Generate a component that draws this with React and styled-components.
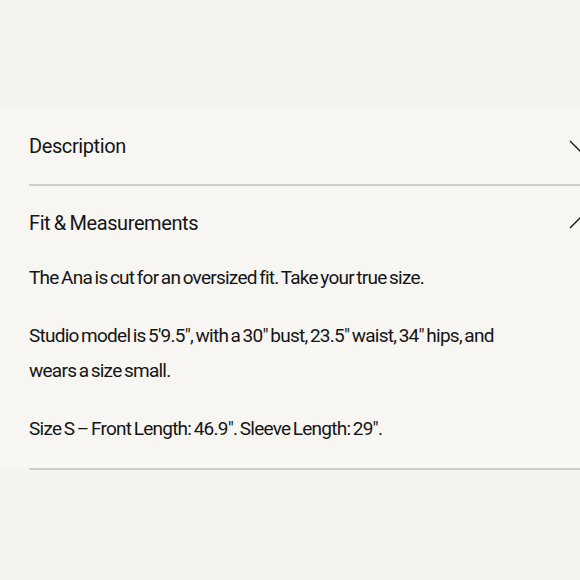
import React from "react";
import styled, { createGlobalStyle } from "styled-components";

const GlobalStyle = createGlobalStyle`
  html, body {
    margin: 0;
    padding: 0;
    background: #f4f3ef;
    overflow: hidden;
  }
  body {
    font-family: Roboto, "Liberation Sans", Arial, sans-serif;
    color: #151515;
  }
`;

const Page = styled.div`
  width: 580px;
  height: 580px;
  padding-top: 108px;
  box-sizing: border-box;
  overflow: hidden;
`;

const Panel = styled.div`
  background: #f7f6f2;
  padding-left: 29px;
  margin-right: -11px;
`;

const Item = styled.div`
  border-bottom: 2px solid #d0cec9;
`;

const Header = styled.div`
  display: flex;
  align-items: center;
  justify-content: space-between;
  height: ${(p) => p.$height}px;
`;

const Title = styled.span`
  font-size: 20px;
  letter-spacing: -0.4px;
  word-spacing: -1px;
`;

const Body = styled.div`
  max-width: 505px;
  padding-bottom: 22px;
`;

const Para = styled.p`
  margin: 0 0 23px;
  font-size: 19px;
  line-height: 35px;
  letter-spacing: -0.75px;
  word-spacing: -1.5px;
  &:last-child {
    margin-bottom: 0;
  }
`;

const Chevron = ({ up }) => (
  <svg width="22" height="12" viewBox="0 0 22 12" fill="none">
    <path
      d={up ? "M1 11 L11 1 L21 11" : "M1 1 L11 11 L21 1"}
      stroke="#151515"
      strokeWidth="1.3"
    />
  </svg>
);

export default function App() {
  return (
    <>
      <GlobalStyle />
      <Page>
        <Panel>
          <Item>
            <Header $height={76}>
              <Title>Description</Title>
              <Chevron />
            </Header>
          </Item>
          <Item>
            <Header $height={74}>
              <Title>Fit &amp; Measurements</Title>
              <Chevron up />
            </Header>
            <Body>
              <Para>The Ana is cut for an oversized fit. Take your true size.</Para>
              <Para>
                Studio model is 5'9.5", with a 30" bust, 23.5" waist, 34" hips, and
                wears a size small.
              </Para>
              <Para>Size S – Front Length: 46.9". Sleeve Length: 29".</Para>
            </Body>
          </Item>
        </Panel>
      </Page>
    </>
  );
}
